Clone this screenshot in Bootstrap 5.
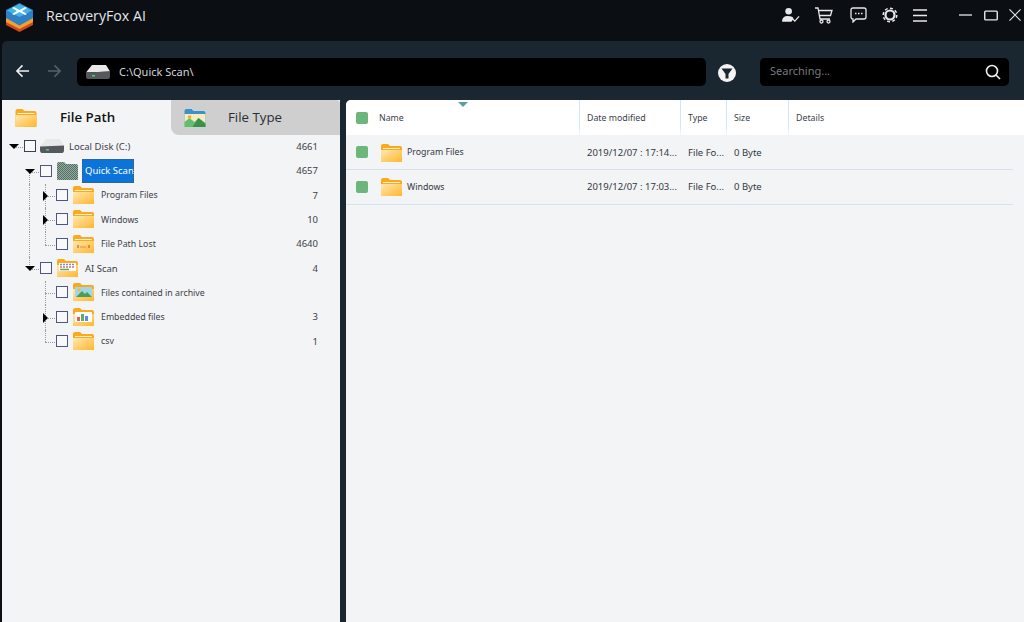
<!DOCTYPE html>
<html lang="en">
<head>
<meta charset="utf-8">
<title>RecoveryFox AI</title>
<link href="https://cdn.jsdelivr.net/npm/bootstrap@5.3.0/dist/css/bootstrap.min.css" rel="stylesheet">
<style>
html,body{height:100%;overflow:hidden;background:#0b0e13}
body{font-family:"Noto Sans","Liberation Sans",sans-serif;font-size:9.5px;color:#3a3f4a}
.app-top{height:41px;background:#0b0e13;padding-left:5px}
.app-logo{width:29px;height:29px;margin-top:-6px}
.app-name{font-family:"Open Sans",sans-serif;font-size:14.2px;color:#e4e6e8;margin-left:12px;margin-top:-9px}
.top-tools{padding-right:3px;margin-top:-11px}
.top-tools svg{display:block}
.shell{height:581px;background:#1a2630;margin-left:2px;border-top-left-radius:5px;overflow:hidden}
.tbar{height:59px;padding:17px 15px 0 13px}
.nav-arrow{width:15px;height:16px;margin-top:5px;flex:none}
.nav-next{margin-left:17px}
.pathbox{height:28px;width:629px;background:#000;border-radius:5px;margin-left:15px;padding-left:8px;color:#d4d6d8;font-size:11px}
.pathbox span{margin-left:8px}
.filter-ic{width:18px;height:18px;margin-left:12px;margin-top:6px;flex:none}
.searchbox{height:28px;width:249px;background:#000;border-radius:5px;margin-left:24px;padding:0 8px 0 10px;color:#77797d;font-size:11px}
.searchbox span{margin-top:-2px}
.panes{height:522px;gap:6px}
.left-pane{width:338px;background:#f3f4f5;flex:none}
.right-pane{flex:1;background:#f3f4f5;border-top-left-radius:5px;overflow:hidden}
.tabset{height:35px}
.tab-on,.tab-off{width:169px;font-size:13.3px;color:#111;font-family:"Open Sans",sans-serif;padding-left:13px}
.tab-on{background:#f3f4f5;border-top-left-radius:4px;font-weight:600}
.tab-off{background:#cfcfcf;border-radius:0 4px 0 8px;color:#2a2d33;font-weight:500}
.tab-on span{margin-left:23px;margin-top:1px}
.tab-off span{margin-left:22px;margin-top:1px}
.treebox{padding:0 22px 0 3px}
.trow{height:24.35px;position:relative}
.cell{width:16px;height:100%;flex:none;position:relative}
.vl::before{content:"";position:absolute;left:7.5px;top:0;bottom:0;border-left:1px dotted #9a9a9a}
.vh::before{content:"";position:absolute;left:7.5px;top:0;height:50%;border-left:1px dotted #9a9a9a}
.vd::before{content:"";position:absolute;left:7.5px;top:50%;bottom:0;border-left:1px dotted #9a9a9a}
.hl::after{content:"";position:absolute;left:8px;width:10px;top:50%;border-top:1px dotted #9a9a9a}
.arr-d{position:absolute;left:4px;top:50%;margin-top:-3px;border:5px solid transparent;border-bottom:0;border-top:5px solid #000;z-index:1}
.arr-r{position:absolute;left:5.500px;top:50%;margin-top:-5px;border:5px solid transparent;border-right:0;border-left:5px solid #000;z-index:1}
.tick{width:12px;height:12px;border:1.5px solid #4c5680;background:#f7f8f8;flex:none;margin-left:3px;margin-top:-2px;z-index:1}
.lvl0 .tick{border-color:#3c3f52}
.t-ic{flex:none;margin-left:5px;width:21px;height:20px;margin-top:-2px}
.t-disk{width:26px;height:14px;margin-left:3px}
.t-name{margin-left:7px;color:#3c4048;white-space:nowrap;font-size:8.8px}
.t-big{font-size:9.5px}
.sel-name{background:#0a74da;color:#fff;margin-left:4px;padding:0 3px;height:24px;line-height:24px;width:52px;white-space:nowrap;outline:1px dotted #555;outline-offset:-1px;margin-top:-2px}
.t-count{margin-left:auto;color:#3c4048}
.thead-row{height:35.300px;background:#fff;font-size:8.8px}
.thead-row>div{padding-top:1px}
.drow{height:34.7px;border-bottom:1px solid #d5e1ee;margin-right:11px;color:#33373f}
.drow>div{padding-top:1px}
.gchk{width:12px;height:12px;background:#6cb57b;border-radius:2px;flex:none;margin-left:10px}
.thead-row>.gchk,.drow>.gchk{padding:0}
.c-name{width:211px;padding-left:11px;flex:none;height:100%}
.c-date{width:101px;padding-left:7px;flex:none;height:100%}
.c-type{width:46px;padding-left:7px;flex:none;height:100%;white-space:nowrap}
.c-size{width:62px;padding-left:7px;flex:none;height:100%}
.c-det{padding-left:7px;height:100%}
.drow .c-date,.drow .c-type,.drow .c-size{padding-left:8px}
.thead-row>.c-date,.thead-row>.c-type,.thead-row>.c-size,.thead-row>.c-det{border-left:1px solid;border-image:linear-gradient(#cfe8f5 70%,#f4fbff) 1}
.thead-row .c-name{position:relative}
.c-name .sort{position:absolute;left:90px;top:2px;border:5px solid transparent;border-top:5px solid #5f9ea0;border-bottom:0}
.r-folder{width:21px;height:20px;flex:none;margin-left:13px;margin-right:5px}
.rname{font-size:8.8px}
</style>
</head>
<body>
<svg width="0" height="0" style="position:absolute">
<defs>
<linearGradient id="fg" x1="0" y1="0" x2="1" y2="1"><stop offset="0" stop-color="#ffe9b0"/><stop offset="1" stop-color="#ffb62e"/></linearGradient>
<pattern id="dith" width="2" height="2" patternUnits="userSpaceOnUse"><rect width="2" height="2" fill="#a8ab78"/><rect width="1" height="1" fill="#3f6f8c"/><rect x="1" y="1" width="1" height="1" fill="#3f6f8c"/></pattern>
</defs>
<symbol id="folder" viewBox="0 0 21 20"><path d="M0 3q0-2 2-2h5l2 2h10q2 0 2 2v13q0 1-1 1H1q-1 0-1-1z" fill="#fba91e"/><path d="M2 5h17v1H2z" fill="#fff3d2"/><path d="M0 7h21v11q0 1-1 1H1q-1 0-1-1z" fill="url(#fg)"/></symbol>
<symbol id="folder-sel" viewBox="0 0 21 20"><path d="M0 3q0-2 2-2h5l2 2h10q2 0 2 2v13q0 1-1 1H1q-1 0-1-1z" fill="url(#dith)"/></symbol>
<symbol id="folder-lost" viewBox="0 0 21 20"><use href="#folder"/><path d="M5 11v3M16 11v3" stroke="#d84315" stroke-width="1"/><path d="M7.500 13h6" stroke="#d84315" stroke-dasharray="1 1" stroke-width="1.2"/></symbol>
<symbol id="folder-ai" viewBox="0 0 21 20"><use href="#folder"/><rect x="2" y="5" width="17" height="8" fill="#fff"/><path d="M3 6.500h15" stroke="#7a8bc2" stroke-width="1.500" stroke-dasharray="2 1"/><path d="M3 9h15" stroke="#d86a8a" stroke-width="1.500" stroke-dasharray="2 1"/><path d="M3 11.500h9" stroke="#58a95f" stroke-width="1.500"/></symbol>
<symbol id="folder-img" viewBox="0 0 21 20"><use href="#folder"/><rect x="2" y="5" width="17" height="10" fill="#9fd6e8"/><path d="M3 15l6-6 3 3 2-2 5 5z" fill="#4a9d55"/><circle cx="6" cy="8" r="1.500" fill="#ffb62e"/></symbol>
<symbol id="folder-chart" viewBox="0 0 21 20"><use href="#folder"/><rect x="2" y="5" width="17" height="10" fill="#fff"/><rect x="4" y="10" width="3" height="4" fill="#e5604d"/><rect x="8" y="7" width="3" height="7" fill="#5cae6a"/><rect x="12" y="9" width="3" height="5" fill="#5b92cc"/></symbol>
<symbol id="folder-blue" viewBox="0 0 21 20"><path d="M0 3q0-2 2-2h5l2 2h10q2 0 2 2v13q0 1-1 1H1q-1 0-1-1z" fill="#3f8fc9"/><rect x="0" y="6" width="21" height="13" fill="#f6ecc4"/><path d="M0 19v-5l5-4 5 4 4-4 7 5v4z" fill="#5fbf6a"/><path d="M8 19l6-9 7 6v3z" fill="#3d8f4c"/><circle cx="5" cy="9" r="1.800" fill="#ffa726"/></symbol>
<symbol id="disk" viewBox="0 0 26 14"><path d="M1 7.500L7 0h14l4 6.500z" fill="#e8e8e8"/><path d="M1 7.500l24-1V11q0 3-2 3H3q-2 0-2-3z" fill="#55585c"/><rect x="7" y="10" width="3" height="1.500" fill="#4fd06b"/></symbol>
</svg>

<div class="app-top d-flex align-items-center">
  <svg class="app-logo" viewBox="0 0 29 29"><path d="M1 18l13.500 7.500L28 18v4l-13.500 7L1 22z" fill="#d2481c"/><path d="M1 14l13.500 8L28 14v5l-13.500 7L1 19z" fill="#f0a22e"/><path d="M14.500 0L28 7v8l-13.500 7.500L1 15V7z" fill="#2f7fc8"/><path d="M14.500 1L27 7.500 14.500 14 2 7.500z" fill="#3fb6e6"/><path d="M9 4l5.500 3L20 4l2 1-5 3 5 3-2 1-5.500-3L9 12l-2-1 5-3-5-3z" fill="#fff"/></svg>
  <div class="app-name">RecoveryFox AI</div>
  <div class="top-tools ms-auto d-flex align-items-center">
    <svg width="18" height="16" viewBox="0 0 19 16"><circle cx="7" cy="4" r="3.500" fill="#e6e8ea"/><path d="M0 15q0-6 6-6t6 3l-2 3z" fill="#e6e8ea"/><path d="M11 12l2.500 2.500L18 9.500" fill="none" stroke="#e6e8ea" stroke-width="1.300"/></svg>
    <svg style="margin-left:15px" width="18" height="17" viewBox="0 0 18 17" fill="none" stroke="#e6e8ea" stroke-width="1.300"><path d="M0 1h3l2 11h10M4 3.500h13l-1.500 5H5"/><circle cx="6.500" cy="14.500" r="1.500"/><circle cx="13.500" cy="14.500" r="1.500"/></svg>
    <svg style="margin-left:17px" width="17" height="16" viewBox="0 0 17 16" fill="none" stroke="#e6e8ea" stroke-width="1.300"><path d="M3 1h11q2 0 2 2v7q0 2-2 2H6l-3 3v-3q-2 0-2-2V3q0-2 2-2z"/><path d="M5 6.500h1.500M8 6.500h1.500M11 6.500h1.500" stroke-width="1.600"/></svg>
    <svg style="margin-left:15px" width="16" height="16" viewBox="0 0 16 16" fill="none" stroke="#e6e8ea"><circle cx="8" cy="8" r="4.500" stroke-width="2.200"/><circle cx="8" cy="8" r="6.800" stroke-width="1.500" stroke-dasharray="3 2.300"/></svg>
    <svg style="margin-left:15px" width="14" height="13" viewBox="0 0 14 13" stroke="#e6e8ea" stroke-width="1.300"><path d="M0 1h14M0 6.500h14M0 12h14"/></svg>
    <svg style="margin-left:32px" width="13" height="2" viewBox="0 0 13 2" stroke="#e6e8ea" stroke-width="1.300"><path d="M0 1h13"/></svg>
    <svg style="margin-left:12px" width="14" height="11" viewBox="0 0 15 11" fill="none" stroke="#e6e8ea" stroke-width="1.500"><rect x=".8" y=".8" width="13.400" height="9.400" rx="1"/></svg>
    <svg style="margin-left:11px" width="12" height="12" viewBox="0 0 13 13" stroke="#e6e8ea" stroke-width="1.200"><path d="M.5.500l12 12M12.500.500l-12 12"/></svg>
  </div>
</div>

<div class="shell">
  <div class="tbar d-flex align-items-start">
    <svg class="nav-arrow" viewBox="0 0 16 16" fill="none" stroke="#f2f2f2" stroke-width="1.600"><path d="M15 8H2M8 2L2 8l6 6"/></svg>
    <svg class="nav-arrow nav-next" viewBox="0 0 16 16" fill="none" stroke="#5a6168" stroke-width="1.600"><path d="M1 8h13M8 2l6 6-6 6"/></svg>
    <div class="pathbox d-flex align-items-center">
      <svg width="26" height="14"><use href="#disk"/></svg>
      <span>C:\Quick Scan\</span>
    </div>
    <svg class="filter-ic" viewBox="0 0 18 18"><circle cx="9" cy="9" r="9" fill="#f4f4f4"/><path d="M3.500 4.500h11L10.500 10v4.500h-3V10z" fill="#1a2630"/></svg>
    <div class="searchbox d-flex align-items-center justify-content-between">
      <span>Searching...</span>
      <svg width="16" height="16" viewBox="0 0 16 16" fill="none" stroke="#eee" stroke-width="1.600"><circle cx="7" cy="7" r="5.500"/><path d="M11 11l4 4"/></svg>
    </div>
  </div>
  <div class="panes d-flex">
    <div class="left-pane">
      <div class="tabset d-flex">
        <div class="tab-on d-flex align-items-center"><svg width="22" height="20"><use href="#folder"/></svg><span>File Path</span></div>
        <div class="tab-off d-flex align-items-center"><svg width="22" height="20"><use href="#folder-blue"/></svg><span>File Type</span></div>
      </div>
      <div class="treebox">
        <div class="trow lvl0 d-flex align-items-center"><div class="cell hl"><i class="arr-d"></i></div><div class="tick"></div><svg class="t-ic t-disk" style="height:14px"><use href="#disk"/></svg><div class="t-name t-big" style="margin-left:4px">Local Disk (C:)</div><div class="t-count">4661</div></div>
        <div class="trow d-flex align-items-center"><div class="cell"></div><div class="cell vd hl"><i class="arr-d"></i></div><div class="tick"></div><svg class="t-ic"><use href="#folder-sel"/></svg><div class="sel-name">Quick Scan</div><div class="t-count">4657</div></div>
        <div class="trow d-flex align-items-center"><div class="cell"></div><div class="cell vl"></div><div class="cell vl hl"><i class="arr-r"></i></div><div class="tick"></div><svg class="t-ic"><use href="#folder"/></svg><div class="t-name">Program Files</div><div class="t-count">7</div></div>
        <div class="trow d-flex align-items-center"><div class="cell"></div><div class="cell vl"></div><div class="cell vl hl"><i class="arr-r"></i></div><div class="tick"></div><svg class="t-ic"><use href="#folder"/></svg><div class="t-name">Windows</div><div class="t-count">10</div></div>
        <div class="trow d-flex align-items-center"><div class="cell"></div><div class="cell vl"></div><div class="cell vh hl"></div><div class="tick"></div><svg class="t-ic"><use href="#folder-lost"/></svg><div class="t-name">File Path Lost</div><div class="t-count">4640</div></div>
        <div class="trow d-flex align-items-center"><div class="cell"></div><div class="cell vh hl"><i class="arr-d"></i></div><div class="tick"></div><svg class="t-ic"><use href="#folder-ai"/></svg><div class="t-name t-big">AI Scan</div><div class="t-count">4</div></div>
        <div class="trow d-flex align-items-center"><div class="cell"></div><div class="cell"></div><div class="cell vl hl"></div><div class="tick"></div><svg class="t-ic"><use href="#folder-img"/></svg><div class="t-name">Files contained in archive</div></div>
        <div class="trow d-flex align-items-center"><div class="cell"></div><div class="cell"></div><div class="cell vl hl"><i class="arr-r"></i></div><div class="tick"></div><svg class="t-ic"><use href="#folder-chart"/></svg><div class="t-name">Embedded files</div><div class="t-count">3</div></div>
        <div class="trow d-flex align-items-center"><div class="cell"></div><div class="cell"></div><div class="cell vh hl"></div><div class="tick"></div><svg class="t-ic"><use href="#folder"/></svg><div class="t-name">csv</div><div class="t-count">1</div></div>
      </div>
    </div>
    <div class="right-pane">
      <div class="thead-row d-flex align-items-center">
        <div class="gchk"></div>
        <div class="c-name d-flex align-items-center">Name<i class="sort"></i></div>
        <div class="c-date d-flex align-items-center">Date modified</div>
        <div class="c-type d-flex align-items-center">Type</div>
        <div class="c-size d-flex align-items-center">Size</div>
        <div class="c-det d-flex align-items-center">Details</div>
      </div>
      <div class="drow d-flex align-items-center">
        <div class="gchk"></div>
        <div class="c-name d-flex align-items-center rname" style="padding-left:0"><svg class="r-folder"><use href="#folder"/></svg>Program Files</div>
        <div class="c-date d-flex align-items-center">2019/12/07 : 17:14...</div>
        <div class="c-type d-flex align-items-center">File Fo...</div>
        <div class="c-size d-flex align-items-center">0 Byte</div>
      </div>
      <div class="drow d-flex align-items-center">
        <div class="gchk"></div>
        <div class="c-name d-flex align-items-center rname" style="padding-left:0"><svg class="r-folder"><use href="#folder"/></svg>Windows</div>
        <div class="c-date d-flex align-items-center">2019/12/07 : 17:03...</div>
        <div class="c-type d-flex align-items-center">File Fo...</div>
        <div class="c-size d-flex align-items-center">0 Byte</div>
      </div>
    </div>
  </div>
</div>
<script src="https://cdn.jsdelivr.net/npm/bootstrap@5.3.0/dist/js/bootstrap.bundle.min.js"></script>
</body>
</html>
